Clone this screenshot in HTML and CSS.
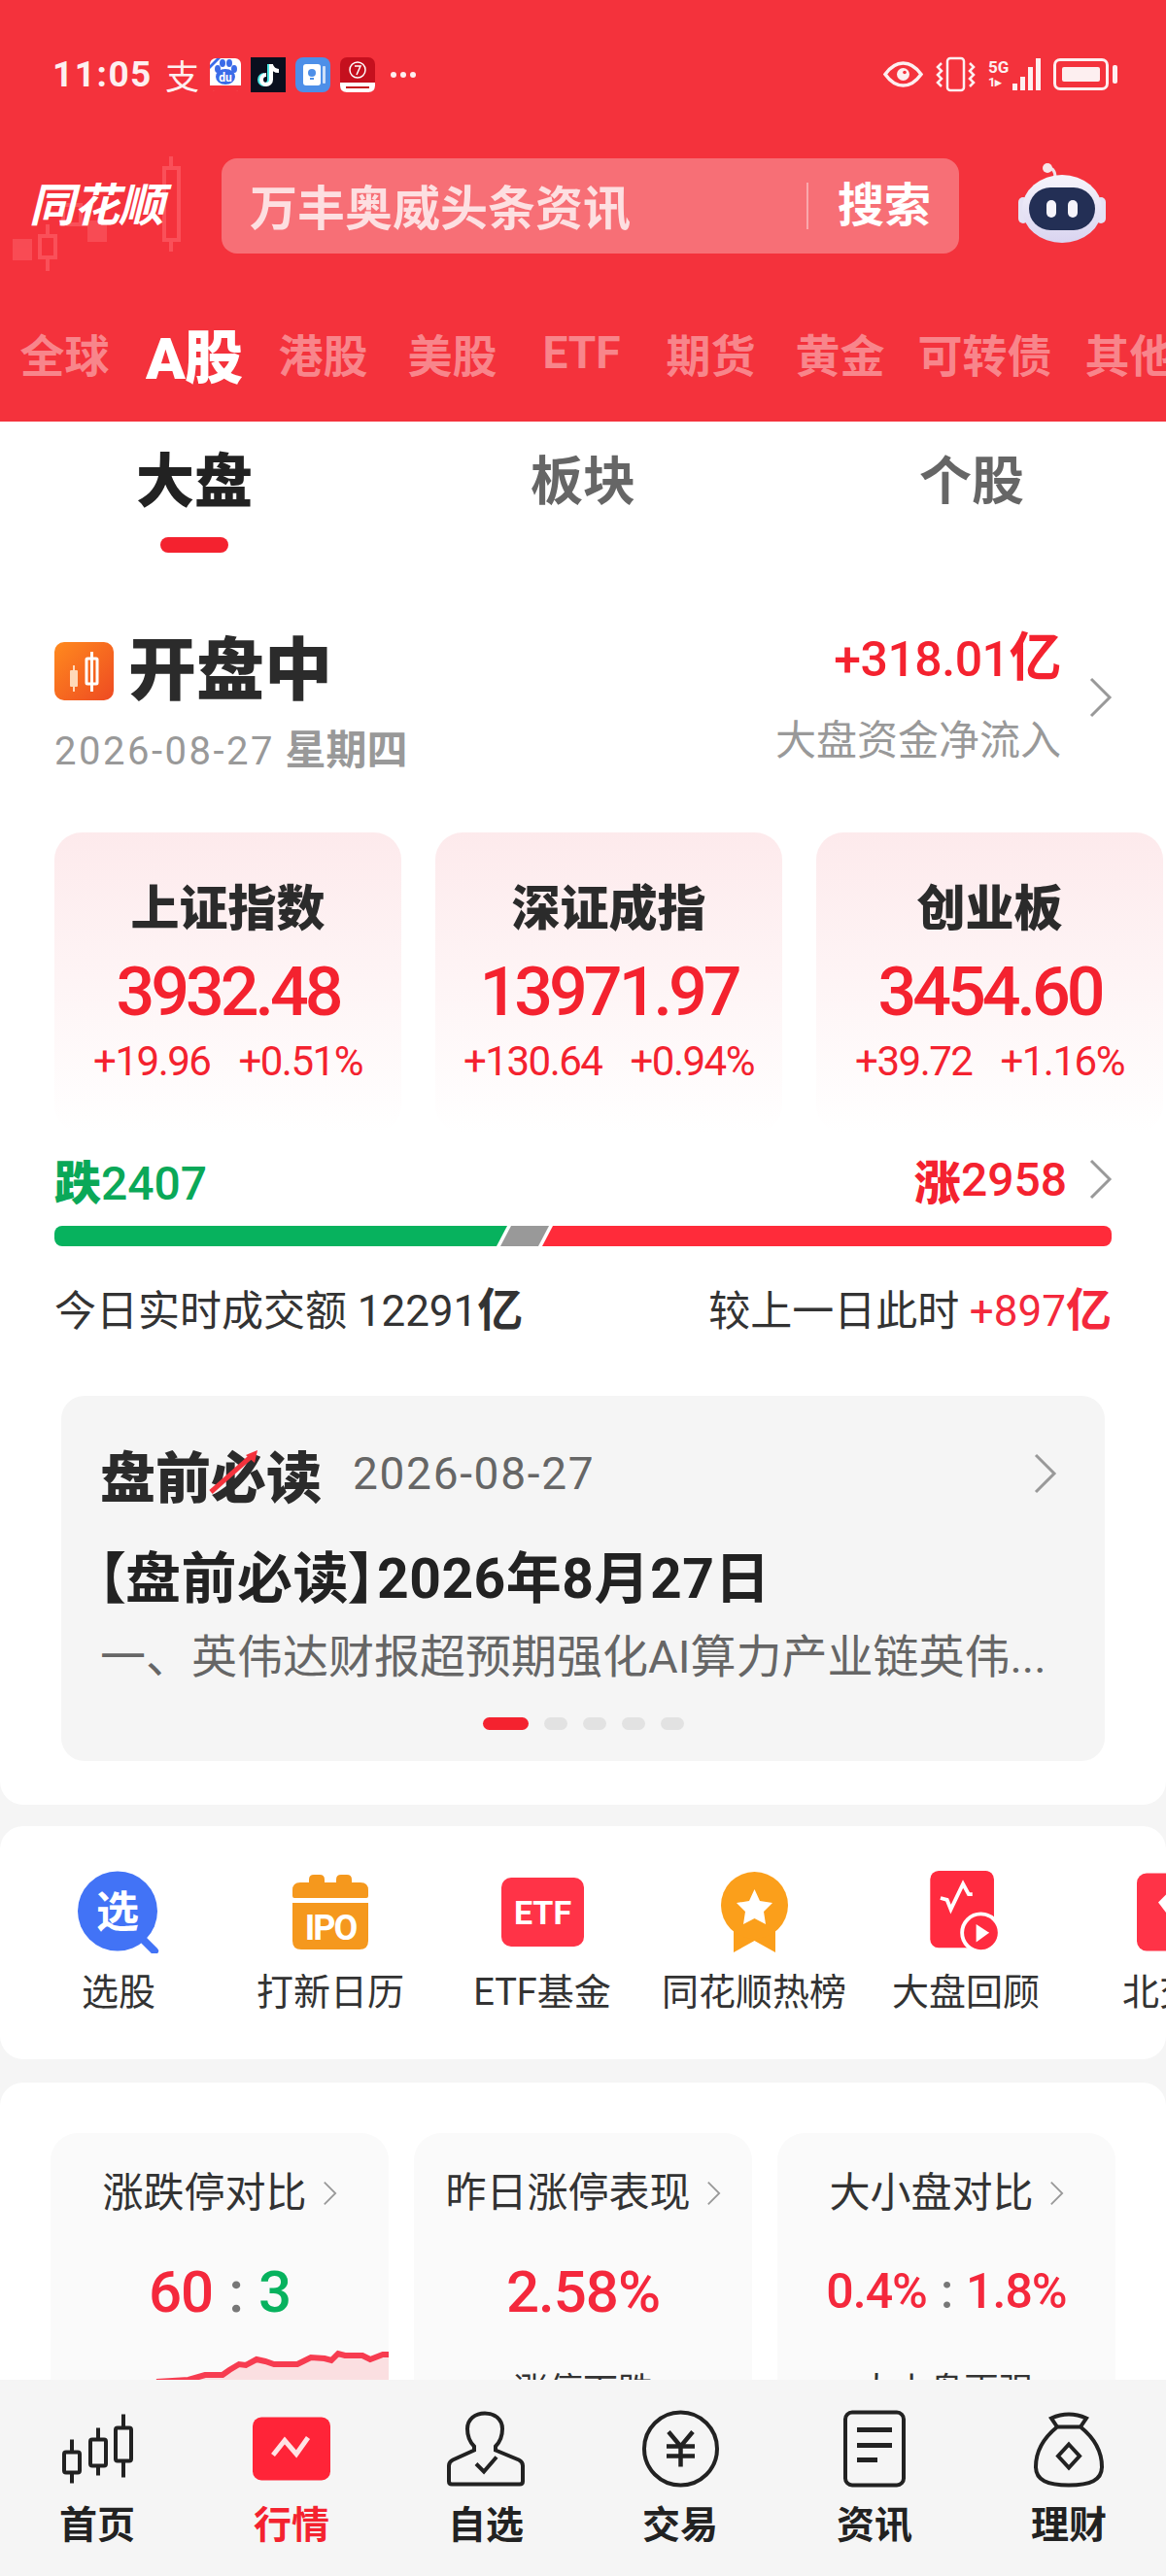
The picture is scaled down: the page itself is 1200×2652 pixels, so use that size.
FILE: index.html
```html
<!DOCTYPE html>
<html lang="zh-CN">
<head>
  <meta charset="UTF-8">
  <title>同花顺 行情</title>
  <link rel="stylesheet" href="styles.css">
</head>
<body>
  <svg class="defs" width="0" height="0">
    <symbol id="chevron" viewBox="0 0 25 42"><polyline points="3,2 22,21 3,40" fill="none" stroke="#999" stroke-width="3"/></symbol>
  </svg>

  <div class="page">
    <div class="header">
      <div class="statusbar">
        <div class="status-left">
          <span class="time">11:05</span>
          <span class="zhi">支</span>
          <svg class="app" width="32" height="34" viewBox="0 0 32 34">
            <rect width="32" height="34" rx="6" fill="#fff"/>
            <path d="M0 28h32v2q0 4-5 4H5q-5 0-5-4z" fill="#f4323c"/>
            <ellipse cx="8" cy="11" rx="3" ry="4" fill="#3a6be8"/><ellipse cx="13" cy="5" rx="3" ry="4" fill="#3a6be8"/><ellipse cx="20" cy="5" rx="3" ry="4" fill="#3a6be8"/><ellipse cx="25" cy="11" rx="3" ry="4" fill="#3a6be8"/>
            <ellipse cx="16" cy="19" rx="10" ry="8" fill="#3a6be8"/>
            <text x="16" y="24" text-anchor="middle" class="icon-text" font-size="12" fill="#fff">du</text>
            <path d="M0 7l7-7h4L0 11z" fill="#3a6be8"/>
          </svg>
          <svg class="app" width="36" height="36" viewBox="0 0 36 36">
            <rect width="36" height="36" fill="#0a0f1e"/>
            <path d="M19 7v16a5 5 0 1 1-5-5" fill="none" stroke="#4de8e4" stroke-width="4"/>
            <path d="M21 7v16a5 5 0 1 1-5-5M21 8q2 6 8 6" fill="none" stroke="#fff" stroke-width="4"/>
          </svg>
          <svg class="app" width="36" height="36" viewBox="0 0 36 36">
            <rect width="36" height="36" rx="8" fill="#4d8fe8"/>
            <rect x="8" y="7" width="18" height="22" rx="3" fill="#fff"/>
            <rect x="28" y="9" width="3" height="18" rx="1" fill="#cfe0f8"/>
            <circle cx="17" cy="16" r="4" fill="#4d8fe8"/><rect x="15" y="21" width="4" height="2" fill="#4d8fe8"/>
          </svg>
          <svg class="app" width="36" height="36" viewBox="0 0 36 36">
            <rect width="36" height="36" rx="7" fill="#c5101e"/>
            <path d="M0 26h36v3q0 7-7 7H7q-7 0-7-7z" fill="#fff"/>
            <circle cx="18" cy="13" r="8" fill="none" stroke="#fff" stroke-width="1.5"/>
            <path d="M15 9h6l-4 9" fill="none" stroke="#fff" stroke-width="1.5"/>
            <rect x="6" y="30" width="24" height="2" fill="#c5101e"/>
          </svg>
          <span class="more"><i></i><i></i><i></i></span>
        </div>
        <div class="status-right">
          <svg width="41" height="27" viewBox="0 0 41 27">
            <path d="M2 13.5C8 5 14 2 20.500 2S33 5 39 13.500C33 22 27 25 20.500 25S8 22 2 13.500Z" fill="none" stroke="#fdeff0" stroke-width="3.500"/>
            <circle cx="20.500" cy="13.500" r="6.500" fill="#fdeff0"/><circle cx="22" cy="11.500" r="1.800" fill="#f4323c"/>
          </svg>
          <svg width="41" height="37" viewBox="0 0 41 37">
            <rect x="12" y="2" width="17" height="33" rx="3" fill="none" stroke="#fdeff0" stroke-width="2.500"/>
            <path d="M6 7L2 11l4 4-4 4 4 4-4 4 4 4M35 7l4 4-4 4 4 4-4 4 4 4-4 4" fill="none" stroke="#fdeff0" stroke-width="2.500"/>
          </svg>
          <div class="signal">
            <span class="net"><b>5G</b><b class="net-sub">1▸</b></span>
            <span class="bars"><i class="b1"></i><i class="b2"></i><i class="b3"></i><i class="b4"></i></span>
          </div>
          <div class="battery"><span class="cell"><i></i></span><span class="nub"></span></div>
        </div>
      </div>

      <div class="search-row">
        <svg class="logo-candles" width="190" height="130" viewBox="0 0 190 130">
          <g fill="#ff6a72" opacity=".45">
            <rect x="13" y="85" width="20" height="22"/>
            <rect x="90" y="66" width="20" height="22"/>
          </g>
          <g fill="none" stroke="#ff6a72" stroke-width="4" opacity=".55">
            <rect x="41" y="82" width="16" height="22"/><path d="M49 70v12M49 104v14"/>
            <rect x="65" y="50" width="18" height="20"/>
            <rect x="169" y="12" width="15" height="74"/><path d="M176 0v12M176 86v12"/>
          </g>
        </svg>
        <div class="logo">同花顺</div>
        <div class="search">
          <span class="search-text">万丰奥威头条资讯</span>
          <span class="search-btn">搜索</span>
        </div>
        <svg class="robot" width="90" height="84" viewBox="0 0 90 84">
          <defs>
            <linearGradient id="shell" x1="0" y1="0" x2="0" y2="1"><stop offset="0" stop-color="#f6f4fb"/><stop offset="1" stop-color="#d9d4f0"/></linearGradient>
          </defs>
          <path d="M38 16Q38 6 31 6" fill="none" stroke="#efe3ea" stroke-width="3"/>
          <circle cx="30" cy="6" r="5" fill="#f7e6ea"/>
          <rect x="0" y="36" width="10" height="27" rx="5" fill="#e5e2f4"/>
          <rect x="80" y="36" width="10" height="27" rx="5" fill="#e5e2f4"/>
          <ellipse cx="45" cy="48" rx="41" ry="35" fill="url(#shell)"/>
          <rect x="11" y="26" width="68" height="44" rx="22" fill="#232f55"/>
          <rect x="29" y="39" width="10" height="18" rx="5" fill="#f6f4fb"/>
          <rect x="51" y="39" width="10" height="18" rx="5" fill="#f6f4fb"/>
        </svg>
      </div>

      <div class="market-tabs">
        <span>全球</span><span class="active">A股</span><span>港股</span><span>美股</span><span>ETF</span><span>期货</span><span>黄金</span><span class="wide">可转债</span><span>其他</span>
      </div>
    </div>

    <div class="main-card">
      <div class="subtabs">
        <div class="subtab active">大盘<i></i></div>
        <div class="subtab">板块</div>
        <div class="subtab">个股</div>
      </div>

      <div class="status">
        <div>
          <div class="status-title">
            <svg width="61" height="60" viewBox="0 0 61 60">
              <defs><linearGradient id="orange" x1="0" y1="0" x2="1" y2="1"><stop offset="0" stop-color="#ff8a1e"/><stop offset="1" stop-color="#ee4a22"/></linearGradient></defs>
              <rect width="61" height="60" rx="10" fill="url(#orange)"/>
              <rect x="16" y="29" width="8" height="17" rx="1" fill="#ffd9b8"/><rect x="19" y="24" width="2" height="27" fill="#ffd9b8"/>
              <rect x="33" y="17" width="11" height="26" rx="1" fill="none" stroke="#fff" stroke-width="3"/><rect x="37" y="10" width="3" height="41" fill="#fff"/>
            </svg>
            <span>开盘中</span>
          </div>
          <div class="status-date"><span>2026-08-27</span> <b>星期四</b></div>
        </div>
        <div class="flow">
          <div class="flow-text">
            <div class="flow-num">+318.01<b>亿</b></div>
            <div class="flow-label">大盘资金净流入</div>
          </div>
          <svg class="chev" width="25" height="42"><use href="#chevron"/></svg>
        </div>
      </div>

      <div class="indexes">
        <div class="index-card">
          <div class="index-name">上证指数</div>
          <div class="index-value">3932.48</div>
          <div class="index-change"><span>+19.96</span><span>+0.51%</span></div>
        </div>
        <div class="index-card">
          <div class="index-name">深证成指</div>
          <div class="index-value">13971.97</div>
          <div class="index-change"><span>+130.64</span><span>+0.94%</span></div>
        </div>
        <div class="index-card">
          <div class="index-name">创业板</div>
          <div class="index-value">3454.60</div>
          <div class="index-change"><span>+39.72</span><span>+1.16%</span></div>
        </div>
      </div>

      <div class="breadth">
        <div class="fall"><b>跌</b>2407</div>
        <div class="rise"><b>涨</b>2958<svg class="chev" width="25" height="42"><use href="#chevron"/></svg></div>
      </div>
      <div class="breadth-bar">
        <div class="seg-fall"></div>
        <div class="seg-flat"></div>
        <div class="seg-rise"></div>
      </div>
      <div class="turnover">
        <div>今日实时成交额 <span class="turnover-num">12291<b>亿</b></span></div>
        <div>较上一日此时 <span class="turnover-num up">+897<b>亿</b></span></div>
      </div>

      <div class="read-card">
        <div class="read-head">
          <span class="read-title">盘前必读
            <svg class="read-slash" width="56" height="50" viewBox="0 0 56 50">
              <path d="M4 46L46 9" stroke="#f4323c" stroke-width="5"/><path d="M40 8l12-5-3 13z" fill="#f4323c"/>
            </svg>
          </span>
          <span class="read-date">2026-08-27</span>
          <svg class="read-chev" width="25" height="42"><use href="#chevron"/></svg>
        </div>
        <div class="read-heading">【盘前必读】2026年8月27日</div>
        <div class="read-sub">一、英伟达财报超预期强化AI算力产业链英伟...</div>
        <div class="dots"><i class="on"></i><i></i><i></i><i></i><i></i></div>
      </div>
    </div>

    <div class="entry-card">
      <div class="entry">
        <svg width="86" height="84" viewBox="0 0 86 84">
          <path d="M66 68l14 14" stroke="#4273f6" stroke-width="8" stroke-linecap="round"/>
          <circle cx="42" cy="41" r="41" fill="#4273f6"/>
          <text x="42" y="57" text-anchor="middle" class="icon-text" font-size="44" fill="#fff">选</text>
        </svg>
        <div class="entry-label">选股</div>
      </div>
      <div class="entry">
        <svg width="78" height="79" viewBox="0 0 78 79">
          <path d="M17 6q0-5 5-5h6q5 0 5 5v3h12V6q0-5 5-5h6q5 0 5 5v3h9q8 0 8 8v6q0 2-2 2H2q-2 0-2-2v-6q0-8 8-8h9z" fill="#f5981d"/>
          <path d="M0 30h78v39q0 9-9 9H9q-9 0-9-9z" fill="#f5981d"/>
          <text x="39" y="68" text-anchor="middle" class="icon-text narrow" font-size="36" fill="#fff">IPO</text>
        </svg>
        <div class="entry-label">打新日历</div>
      </div>
      <div class="entry">
        <svg width="85" height="71" viewBox="0 0 85 71">
          <rect width="85" height="71" rx="10" fill="#ff3347"/>
          <text x="42.500" y="48" text-anchor="middle" class="icon-text" font-size="34" fill="#fff">ETF</text>
        </svg>
        <div class="entry-label">ETF基金</div>
      </div>
      <div class="entry">
        <svg width="69" height="83" viewBox="0 0 69 83">
          <path d="M13 50h43v33l-21.500-12L13 83z" fill="#fb9f1b"/>
          <circle cx="34.500" cy="34.500" r="34.500" fill="#fb9f1b"/>
          <polygon points="34.500,18 40,30 53,32 44,41 46,54 34.500,48 23,54 25,41 16,32 29,30" fill="#fff"/>
        </svg>
        <div class="entry-label">同花顺热榜</div>
      </div>
      <div class="entry">
        <svg width="76" height="88" viewBox="0 0 76 88">
          <rect width="68" height="82" rx="9" fill="#ff2b3f"/>
          <polyline points="11,29 18,31 22,41 35,14 41,25 45,25" fill="none" stroke="#fff" stroke-width="4"/>
          <circle cx="54" cy="66" r="20" fill="#ff2b3f" stroke="#fff" stroke-width="4"/>
          <polygon points="49,57 49,76 63,66" fill="#fff"/>
        </svg>
        <div class="entry-label">大盘回顾</div>
      </div>
      <div class="entry">
        <svg width="84" height="80" viewBox="0 0 84 80">
          <rect width="84" height="80" rx="10" fill="#ff3347"/>
          <path d="M22 30l12-12h16l12 12-20 26z" fill="#fff"/>
        </svg>
        <div class="entry-label">北交所</div>
      </div>
    </div>

    <div class="mini-card">
      <div class="mini">
        <div class="mini-title">涨跌停对比<svg width="15" height="26" viewBox="0 0 25 42"><use href="#chevron"/></svg></div>
        <div class="mini-num"><span class="up">60</span><span class="colon">:</span><span class="down">3</span></div>
        <svg class="spark" width="348" height="50" viewBox="0 0 348 50">
          <path d="M109 35L142 33 159 28 177 28 184 23 194 17 201 18 212 12 221 14 230 17 254 17 268 10 282 11 289 13 296 6 303 8 321 8 329 12 342 7 348 7V50H109Z" fill="#fbdfe1"/>
          <path d="M109 35L142 33 159 28 177 28 184 23 194 17 201 18 212 12 221 14 230 17 254 17 268 10 282 11 289 13 296 6 303 8 321 8 329 12 342 7 348 7" fill="none" stroke="#f73c50" stroke-width="6"/>
        </svg>
      </div>
      <div class="mini">
        <div class="mini-title">昨日涨停表现<svg width="15" height="26" viewBox="0 0 25 42"><use href="#chevron"/></svg></div>
        <div class="mini-num"><span class="up">2.58%</span></div>
        <div class="mini-foot">涨停下跌</div>
      </div>
      <div class="mini">
        <div class="mini-title">大小盘对比<svg width="15" height="26" viewBox="0 0 25 42"><use href="#chevron"/></svg></div>
        <div class="mini-num small"><span class="up">0.4%</span><span class="colon">:</span><span class="up">1.8%</span></div>
        <div class="mini-foot">大小盘更强</div>
      </div>
    </div>

    <div class="tabbar">
      <div class="tab">
        <svg width="73" height="71" viewBox="0 0 73 71" fill="none" stroke="#222" stroke-width="4">
          <rect x="2" y="39" width="16" height="21" rx="2"/><path d="M10 26v13M10 60v11"/>
          <rect x="29" y="26" width="16" height="27" rx="2"/><path d="M37 14v12M37 53v10"/>
          <rect x="55" y="14" width="16" height="34" rx="2"/><path d="M63 0v14M63 48v17"/>
        </svg>
        <span>首页</span>
      </div>
      <div class="tab on">
        <svg width="80" height="65" viewBox="0 0 80 65">
          <rect width="80" height="65" rx="9" fill="#ff2438"/>
          <polyline points="21,39 33,24 45,38 57,21" fill="none" stroke="#ffe3e5" stroke-width="5"/>
        </svg>
        <span>行情</span>
      </div>
      <div class="tab">
        <svg width="80" height="77" viewBox="0 0 80 77" fill="none" stroke="#222" stroke-width="4">
          <path d="M28 36C22 30 21 24 21 18C21 8 29 2 39 2C49 2 57 8 57 18C57 24 56 30 50 36L50 40L74 50Q78 52 78 56L78 72Q78 75 75 75L5 75Q2 75 2 72L2 56Q2 52 6 50L28 40Z"/>
          <polyline points="30,54 38,62 51,47"/>
        </svg>
        <span>自选</span>
      </div>
      <div class="tab">
        <svg width="79" height="79" viewBox="0 0 79 79" fill="none" stroke="#222" stroke-width="4">
          <circle cx="39.500" cy="39.500" r="37.500"/>
          <path d="M27 22L39.500 37 52 22M25 37H54M25 47H54M39.500 37V58" stroke-width="4.500"/>
        </svg>
        <span>交易</span>
      </div>
      <div class="tab">
        <svg width="64" height="79" viewBox="0 0 64 79" fill="none" stroke="#222" stroke-width="4">
          <rect x="2" y="2" width="60" height="75" rx="7"/>
          <path d="M14 20H50M14 36H50M14 51H35" stroke-width="5"/>
        </svg>
        <span>资讯</span>
      </div>
      <div class="tab">
        <svg width="72" height="79" viewBox="0 0 72 79" fill="none" stroke="#222" stroke-width="4">
          <path d="M24 17C8 30 2 45 2 58C2 72 14 77 36 77C58 77 70 72 70 58C70 45 64 30 48 17Z"/>
          <path d="M24 17L18 8Q36 0 54 8L48 17"/>
          <polygon points="36,35 47,47 36,59 25,47"/>
        </svg>
        <span>理财</span>
      </div>
    </div>
  </div>
</body>
</html>
```

FILE: styles.css
```css
body {
  margin: 0;
  background: #f5f5f5;
  font-family: Roboto, "Noto Sans CJK SC", sans-serif;
  color: #333;
}

.defs {
  display: block;
  position: absolute;
}

.page {
  position: relative;
  height: 2652px;
  overflow: hidden;
}

/* header */
.header {
  height: 434px;
  padding-top: 58px;
  box-sizing: border-box;
  background: #f4323c;
}

.statusbar {
  display: flex;
  justify-content: space-between;
  align-items: center;
  height: 37px;
  padding: 0 50px 0 54px;
}

.status-left {
  display: flex;
  align-items: center;
}

.time {
  width: 116px;
  font-size: 37px;
  font-weight: 700;
  color: #fdeff0;
  letter-spacing: 1.500px;
}

.zhi {
  width: 46px;
  font-size: 35px;
  color: #fdeff0;
}

.app {
  margin-right: 10px;
}

.more {
  display: flex;
  gap: 4px;
  margin-left: 6px;
}

.more i {
  width: 6px;
  height: 6px;
  border-radius: 50%;
  background: #fdeff0;
}

.status-right {
  display: flex;
  align-items: center;
  gap: 13px;
}

.signal {
  display: flex;
  align-items: flex-end;
  gap: 1px;
  width: 54px;
  height: 33px;
}

.net {
  display: flex;
  flex-direction: column;
  width: 24px;
  font-size: 17px;
  line-height: 16px;
  color: #fdeff0;
}

.net b {
  font-weight: 700;
}

.net-sub {
  font-size: 13px;
}

.bars {
  display: flex;
  align-items: flex-end;
  gap: 3px;
  height: 33px;
}

.bars i {
  width: 5px;
  background: #fdeff0;
}

.bars .b1 { height: 7px; }
.bars .b2 { height: 14px; }
.bars .b3 { height: 24px; }
.bars .b4 { height: 33px; }

.battery {
  display: flex;
  align-items: center;
  gap: 4px;
}

.cell {
  display: block;
  width: 57px;
  height: 33px;
  padding: 6px;
  box-sizing: border-box;
  border: 3px solid #fdeff0;
  border-radius: 7px;
}

.cell i {
  display: block;
  height: 100%;
  border-radius: 2px;
  background: #fdeff0;
}

.nub {
  width: 5px;
  height: 19px;
  border-radius: 2px;
  background: #fdeff0;
}

.search-row {
  position: relative;
  display: flex;
  align-items: center;
  height: 98px;
  margin-top: 68px;
}

.logo-candles {
  position: absolute;
  left: 0;
  top: -2px;
}

.logo {
  position: relative;
  width: 228px;
  padding-left: 30px;
  box-sizing: border-box;
  font-size: 47px;
  font-weight: 700;
  font-style: italic;
  line-height: 60px;
  letter-spacing: -1px;
  color: #fff;
}

.search {
  display: flex;
  justify-content: space-between;
  align-items: center;
  width: 759px;
  height: 98px;
  padding: 0 29px;
  box-sizing: border-box;
  border-radius: 16px;
  background: rgba(255, 255, 255, .3);
}

.search-text {
  margin-bottom: 4px;
  font-size: 49px;
  font-weight: 700;
  color: rgba(255, 255, 255, .78);
}

.search-btn {
  padding-left: 30px;
  border-left: 2px solid rgba(255, 255, 255, .4);
  font-size: 48px;
  font-weight: 700;
  line-height: 48px;
  color: #fff;
}

.robot {
  margin: 0 0 6px 61px;
}

.market-tabs {
  display: flex;
  align-items: center;
  height: 90px;
  margin-top: 57px;
  white-space: nowrap;
  overflow: hidden;
  font-size: 46px;
  font-weight: 700;
  color: rgba(255, 255, 255, .42);
}

.market-tabs span {
  flex: none;
  width: 133px;
  text-align: center;
}

.market-tabs .wide {
  width: 165px;
}

.market-tabs .active {
  font-size: 60px;
  font-weight: 900;
  color: #fff;
  letter-spacing: -1px;
}

/* main card */
.main-card {
  padding-bottom: 45px;
  border-radius: 0 0 24px 24px;
  background: #fff;
}

.subtabs {
  display: grid;
  grid-template-columns: repeat(3, 1fr);
  padding-top: 32px;
}

.subtab {
  display: flex;
  flex-direction: column;
  align-items: center;
  font-size: 54px;
  font-weight: 700;
  line-height: 62px;
  color: #666;
}

.subtab.active {
  font-size: 60px;
  font-weight: 900;
  color: #222;
}

.subtab i {
  width: 70px;
  height: 16px;
  margin-top: 25px;
  border-radius: 8px;
  background: #f4222f;
}

.status {
  display: flex;
  justify-content: space-between;
  height: 140px;
  margin: 79px 0 69px;
  padding: 0 55px 0 56px;
}

.status-title {
  display: flex;
  align-items: center;
  gap: 15px;
  height: 60px;
  margin-top: 13px;
  font-size: 70px;
  font-weight: 900;
  line-height: 60px;
  color: #2b2b2b;
}

.status-date {
  margin-top: 27px;
  font-size: 42px;
  line-height: 50px;
  color: #999;
}

.status-date span {
  font-size: 40px;
  letter-spacing: 2.500px;
}

.status-date b {
  font-weight: 700;
}

.flow {
  display: flex;
  align-items: center;
  gap: 28px;
  height: 139px;
}

.flow-text {
  text-align: right;
}

.flow-num {
  padding-top: 3px;
  font-size: 50px;
  font-weight: 500;
  line-height: 56px;
  letter-spacing: -.500px;
  color: #f4222f;
}

.flow-num b {
  font-size: 54px;
  font-weight: 700;
}

.flow-label {
  margin-top: 31px;
  font-size: 42px;
  line-height: 50px;
  color: #999;
}

.indexes {
  display: flex;
  gap: 35px;
  padding-left: 56px;
}

.index-card {
  flex: none;
  width: 357px;
  height: 309px;
  padding-top: 49px;
  box-sizing: border-box;
  border-radius: 28px;
  background: linear-gradient(#fdeaec, #fff);
  text-align: center;
}

.index-name {
  font-size: 50px;
  font-weight: 900;
  line-height: 60px;
  color: #2b2b2b;
}

.index-value {
  margin-top: 15px;
  font-size: 70px;
  font-weight: 500;
  line-height: 80px;
  letter-spacing: -4px;
  color: #f4222f;
}

.index-change {
  display: flex;
  justify-content: center;
  gap: 29px;
  margin-top: 7px;
  font-size: 42px;
  line-height: 50px;
  letter-spacing: -1.500px;
  color: #f4222f;
}

.breadth {
  display: flex;
  justify-content: space-between;
  align-items: center;
  height: 56px;
  margin-top: 20px;
  padding: 0 55px 0 56px;
  font-size: 48px;
  font-weight: 500;
}

.breadth b {
  font-weight: 900;
}

.fall {
  color: #0aa858;
}

.rise {
  display: flex;
  align-items: center;
  color: #f4222f;
}

.rise .chev {
  margin-left: 22px;
}

.breadth-bar {
  display: flex;
  height: 21px;
  margin: 20px 56px 0;
}

.seg-fall {
  width: 466px;
  border-radius: 8px 0 0 8px;
  background: #07b25e;
  clip-path: polygon(0 0, 100% 0, calc(100% - 11px) 100%, 0 100%);
}

.seg-flat {
  width: 50px;
  margin-left: -7px;
  background: #999;
  clip-path: polygon(11px 0, 100% 0, calc(100% - 11px) 100%, 0 100%);
}

.seg-rise {
  flex: 1;
  margin-left: -7px;
  border-radius: 0 8px 8px 0;
  background: #ff2b3a;
  clip-path: polygon(11px 0, 100% 0, 100% 100%, 0 100%);
}

.turnover {
  display: flex;
  justify-content: space-between;
  margin-top: 38px;
  padding: 0 56px;
  font-size: 43px;
  line-height: 56px;
  color: #333;
}

.turnover-num {
  font-size: 44px;
}

.turnover b {
  font-size: 47px;
  font-weight: 700;
}

.read-card {
  height: 376px;
  margin: 59px 63px 0;
  padding: 45px 40px 0;
  box-sizing: border-box;
  border-radius: 24px;
  background: #f5f5f5;
}

.read-head {
  display: flex;
  align-items: center;
  height: 70px;
}

.read-title {
  position: relative;
  font-size: 57px;
  font-weight: 900;
  color: #2b2b2b;
}

.read-slash {
  position: absolute;
  left: 110px;
  top: 14px;
}

.read-date {
  margin-left: 32px;
  font-size: 46px;
  letter-spacing: 1.700px;
  color: #666;
}

.read-chev {
  margin-left: auto;
  margin-right: 9px;
}

.read-heading {
  margin-top: 39px;
  margin-left: -3px;
  font-size: 57px;
  font-weight: 700;
  line-height: 70px;
  letter-spacing: .500px;
  font-feature-settings: "palt";
  color: #222;
  white-space: nowrap;
}

.read-sub {
  margin-top: 15px;
  font-size: 47px;
  line-height: 60px;
  color: #666;
  white-space: nowrap;
}

.dots {
  display: flex;
  justify-content: center;
  gap: 16px;
  margin-top: 32px;
}

.dots i {
  width: 24px;
  height: 13px;
  border-radius: 7px;
  background: #e2e2e2;
}

.dots .on {
  width: 47px;
  background: #f4222f;
}

/* entry row */
.entry-card {
  display: flex;
  height: 240px;
  margin-top: 22px;
  padding: 46px 0 0 13px;
  box-sizing: border-box;
  border-radius: 24px;
  background: #fff;
  overflow: hidden;
}

.entry {
  flex: none;
  display: flex;
  flex-direction: column;
  align-items: center;
  width: 218px;
}

.entry svg {
  height: 85px;
}

.icon-text {
  font-family: Roboto, "Noto Sans CJK SC", sans-serif;
  font-weight: 700;
}

.icon-text.narrow {
  letter-spacing: -2px;
}

.entry-label {
  margin-top: 15px;
  font-size: 38px;
  line-height: 50px;
  white-space: nowrap;
  color: #333;
}

/* bottom card */
.mini-card {
  display: flex;
  gap: 26px;
  height: 500px;
  margin-top: 24px;
  padding: 52px 0 0 52px;
  box-sizing: border-box;
  border-radius: 24px;
  background: #fff;
}

.mini {
  width: 348px;
  padding-top: 37px;
  box-sizing: border-box;
  border-radius: 28px;
  background: #fafafa;
  text-align: center;
  overflow: hidden;
}

.mini-title {
  display: flex;
  justify-content: center;
  align-items: center;
  gap: 16px;
  font-size: 42px;
  line-height: 50px;
  color: #333;
}

.mini-num {
  display: flex;
  justify-content: center;
  align-items: center;
  gap: 16px;
  height: 80px;
  margin-top: 36px;
  font-size: 60px;
  font-weight: 500;
  letter-spacing: -1px;
}

.mini-num.small {
  gap: 14px;
  font-size: 50px;
}

.up {
  color: #f4283c;
}

.down {
  color: #07b25e;
}

.colon {
  color: #777;
}

.spark {
  display: block;
  margin-top: 18px;
}

.mini-foot {
  margin-top: 38px;
  font-size: 36px;
  line-height: 50px;
  color: #333;
}

/* tab bar sits over the scrolled content */
.tabbar {
  position: absolute;
  left: 0;
  right: 0;
  bottom: 0;
  display: grid;
  grid-template-columns: repeat(6, 1fr);
  height: 202px;
  padding-top: 30px;
  box-sizing: border-box;
  background: #f5f5f5;
}

.tab {
  display: flex;
  flex-direction: column;
  align-items: center;
  font-size: 39px;
  font-weight: 700;
  color: #222;
}

.tab svg {
  height: 82px;
}

.tab span {
  margin-top: 10px;
  line-height: 56px;
}

.tab.on {
  color: #f4222f;
}
```
